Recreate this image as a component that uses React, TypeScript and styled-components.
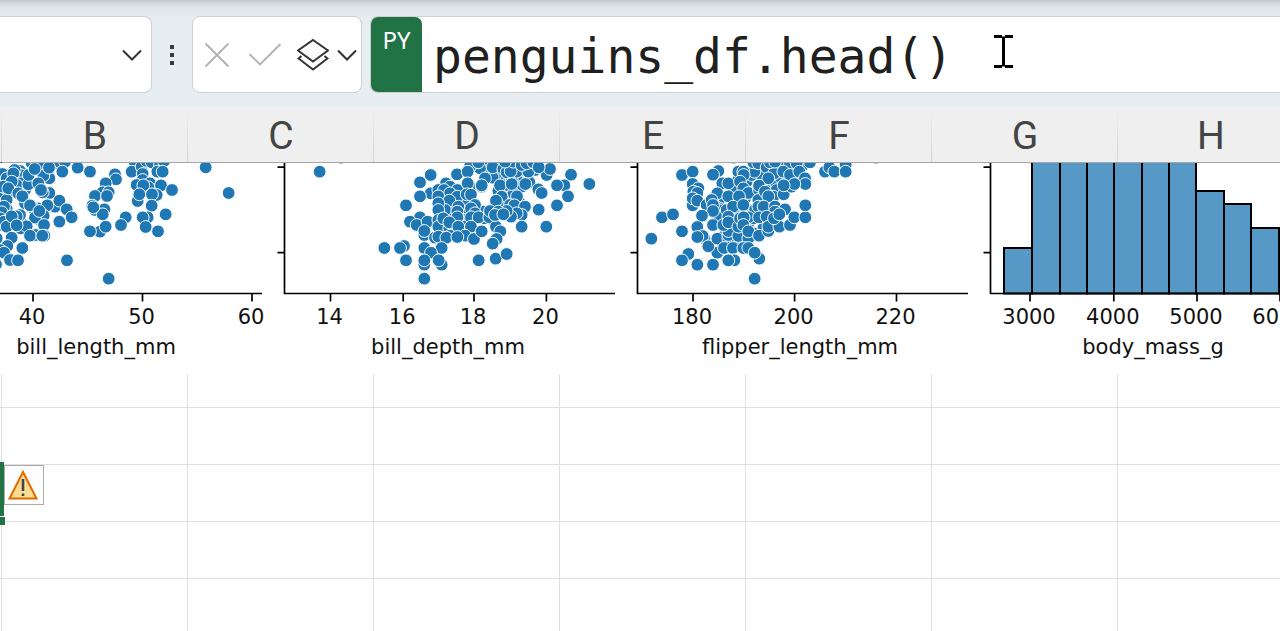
import React, { useEffect, useState } from "react";
import styled, { createGlobalStyle } from "styled-components";

const GlobalStyle = createGlobalStyle`
  *, *::before, *::after { box-sizing: border-box; }
  body {
    margin: 0;
    background: #ffffff;
    color: #444444;
    font-family: "Noto Sans", "Open Sans", sans-serif;
    overflow: hidden;
  }
  button { padding: 0; border: 0; background: none; font: inherit; color: inherit; }
`;

const Page = styled.div`
  display: flex;
  flex-direction: column;
  height: 100vh;
  overflow: hidden;
`;

const FormulaBar = styled.header`
  display: flex;
  flex: none;
  height: 107px;
  padding: 16px 0 14px;
  background: linear-gradient(#c3c8cb 0, #d3d8db 3px, #dfe5e9 8px, #e6eef1 18px);
`;

const Box = styled.div`
  display: flex;
  align-items: center;
  background: #ffffff;
  border: 1px solid #cfcfcf;
  border-radius: 8px;
`;

const NameBox = styled(Box)`
  flex: none;
  width: 152px;
  padding-right: 9px;
  border-left: 0;
  border-top-left-radius: 0;
  border-bottom-left-radius: 0;
`;

const NameInput = styled.input`
  flex: 1;
  min-width: 0;
  height: 60px;
  border: 0;
  outline: 0;
  background: none;
  font: 32px "Noto Sans", sans-serif;
`;

const IconButton = styled.button`
  display: flex;
  flex: none;
  svg { display: block; }
`;

const Grip = styled.div`
  display: flex;
  flex: none;
  flex-direction: column;
  align-items: center;
  justify-content: center;
  gap: 4px;
  width: 40px;
`;

const GripDot = styled.span`
  width: 4px;
  height: 4px;
  background: #3b3b3b;
`;

const ActionBox = styled(Box)`
  flex: none;
  width: 170px;
  margin-right: 8px;
  padding: 0 4px 0 11px;
  justify-content: space-between;
`;

const SplitButton = styled.div`
  display: flex;
  align-items: center;
  gap: 8px;
`;

const FormulaBox = styled(Box)`
  position: relative;
  flex: 1;
  min-width: 0;
  align-items: stretch;
  border-right: 0;
  border-top-right-radius: 0;
  border-bottom-right-radius: 0;
`;

const Language = styled.span`
  flex: none;
  width: 51px;
  padding-top: 7px;
  border-radius: 7px 7px 0 7px;
  background: #217346;
  color: #ffffff;
  font-size: 24px;
  line-height: 32px;
  text-align: center;
`;

const FormulaInput = styled.input`
  flex: 1;
  min-width: 0;
  padding: 2px 0 0 11px;
  border: 0;
  outline: 0;
  background: none;
  color: #202020;
  font: 48px "DejaVu Sans Mono", monospace;
`;

const TextCursor = styled.svg`
  position: absolute;
  left: 623px;
  top: 17px;
`;

const Sheet = styled.main`
  position: relative;
  flex: 1;
  min-height: 0;
  overflow: hidden;
`;

const Grid = styled.table`
  border-collapse: separate;
  border-spacing: 0;
`;

const ColumnHead = styled.th<{ $narrow?: boolean }>`
  min-width: ${(p) => (p.$narrow ? 2 : 186)}px;
  height: 56px;
  padding: 3px 0 0;
  border-bottom: 1px solid ${(p) => (p.$narrow ? "#217346" : "#a6a6a6")};
  background:
    linear-gradient(#efefef, #d3d3d3) right / 1px 100% no-repeat,
    #efefef;
  font-family: Roboto, sans-serif;
  font-size: 39px;
  font-weight: 400;
  line-height: 52px;
`;

const Cell = styled.td<{ $tall?: boolean }>`
  position: relative;
  height: ${(p) => (p.$tall ? 245 : 57)}px;
  padding: 0;
  border-right: 1px solid #e0e0e0;
  border-bottom: 1px solid #e0e0e0;
`;

const Selection = styled.span`
  position: absolute;
  z-index: 1;
  left: 0;
  top: -3px;
  width: 4px;
  height: 54px;
  background: #217346;
  &::after {
    content: "";
    position: absolute;
    left: 0;
    top: 54px;
    width: 5px;
    height: 9px;
    border-top: 1px solid #ffffff;
    background: #217346;
  }
`;

const WarningButton = styled.button`
  position: absolute;
  z-index: 1;
  left: 4px;
  top: 0;
  width: 40px;
  height: 40px;
  border: 1px solid #ababab;
  background: #fdfdfd;
  svg { display: block; }
`;

const Figure = styled.figure`
  position: absolute;
  left: 0;
  top: 56px;
  display: flex;
  width: 100%;
  height: 211px;
  margin: 0;
  overflow: hidden;
  background: #ffffff;
`;

const Panel = styled.svg`
  display: block;
  flex: none;
  font: 21px "DejaVu Sans", sans-serif;
  fill: #111111;
  text-anchor: middle;
`;

type Point = [number, number];
type Tick = [number, string];

/* Marker positions are kept in thirds of a pixel, listed back to front. */
const billLength: Point[] = [
  [30,60],[15,85],[42,70],[70,75],[28,115],[10,120],[75,105],[115,160],[100,160],[75,145],[25,195],[65,205],[120,195],[-4,130],[-4,210],[135,20],[95,24],[150,20],[165,25],
  [7,57],[20,70],[60,48],[62,60],[44,45],[40,55],[62,85],[50,90],[35,80],[85,88],[86,60],[110,25],[125,30],[148,70],[130,62],[104,42],[180,22],[195,20],[147,38],[187,50],[233,38],[270,50],
  [115,85],[10,95],[20,135],[25,100],[55,115],[67,124],[148,114],[128,112],[123,105],[165,155],[178,137],[142,151],[90,151],[131,182],[105,188],[118,168],[200,163],[215,187],[178,200],[132,210],
  [20,162],[12,155],[5,172],[0,190],[12,200],[20,215],[60,180],[50,184],[35,184],[62,220],[80,214],[50,211],[107,240],[133,242],[90,242],[127,242],[35,248],[67,279],[22,273],[-10,250],[0,285],[12,293],[30,315],[54,316],[-12,328],[201,316],[326,371],
  [300,230],[270,229],[317,215],[377,187],[363,210],[345,58],[348,73],[317,85],[308,112],[326,112],[285,123],[321,123],[277,152],[285,165],[313,163],[308,178],[280,157],[405,24],[395,50],[425,35],[440,18],[455,22],[480,30],[492,18],
  [428,57],[472,50],[488,50],[428,75],[410,90],[450,85],[445,97],[430,91],[483,91],[516,105],[413,138],[418,118],[470,120],[456,118],[455,152],[497,178],[443,187],[428,187],[437,216],[474,229],[617,37],[686,114],
];

const billDepth: Point[] = [
  [-151,50],[-87,8],
  [210,115],[230,125],[245,150],[265,135],[285,130],[215,145],[240,165],[290,150],[275,105],[305,100],[320,160],[250,180],[285,175],[300,200],[325,170],[230,205],[285,195],[250,210],[270,230],[300,225],[230,230],[285,215],
  [345,50],[385,45],[355,35],[390,70],[440,70],[450,45],[410,75],[495,45],[455,95],[405,120],[415,105],[430,115],[395,145],[405,150],[370,160],[340,170],[450,145],[370,195],
  [182,60],[150,82],[182,115],[150,124],[108,151],[261,58],[330,40],[300,35],[325,22],[293,50],[228,85],[240,95],[262,105],[293,85],[375,22],[368,68],[368,37],[345,70],[335,95],[335,91],
  [205,105],[222,105],[240,115],[262,125],[205,124],[238,137],[290,118],[303,119],[225,165],[205,145],[205,165],[265,155],[315,150],[303,160],[150,187],[120,200],[140,210],[173,200],[163,240],[163,228],
  [205,195],[205,215],[220,190],[262,170],[262,187],[238,220],[238,202],[315,175],[303,187],[345,190],[326,187],[358,187],[265,215],[303,215],[195,248],[205,245],[240,242],[229,248],[285,242],[262,246],[312,252],[335,229],[378,215],[391,229],[380,252],[368,266],
  [43,279],[102,273],[90,279],[163,279],[215,279],[183,293],[108,316],[163,329],[163,316],[215,329],[206,316],[163,371],[326,316],[377,311],[410,297],
  [408,90],[385,108],[390,91],[425,75],[425,87],[478,82],[466,87],[400,42],[410,52],[440,50],[422,49],[475,50],[430,20],[405,20],[455,30],[470,25],[490,22],[530,60],[540,42],[506,37],[603,59],[658,87],[583,91],[561,91],
  [505,103],[515,114],[594,124],[561,151],[506,164],[441,124],[395,125],[385,150],[378,137],[445,165],[420,150],[433,151],[465,155],[455,180],[440,175],[423,185],[410,168],[360,168],[385,170],[375,180],[400,178],[455,215],[529,215],
];

const flipperLength: Point[] = [
  [325,75],[350,80],[365,60],[325,105],[310,110],[345,130],[385,110],[395,60],[425,50],[445,40],[455,25],[480,25],[405,90],[435,80],[450,65],[475,75],[495,65],[510,70],[515,35],[440,105],
  [235,165],[265,150],[280,125],[265,165],[325,160],[310,175],[355,165],[280,190],[310,195],[325,200],[355,205],[370,190],[395,140],[410,170],[420,195],[430,210],[400,220],[310,225],[340,230],[280,245],[310,250],[370,235],[325,262],
  [156,60],[188,50],[188,87],[205,100],[190,110],[202,114],[188,151],[188,130],[202,137],[265,48],[249,59],[325,50],[373,50],[340,50],[341,60],[370,22],[385,25],[310,8],[410,37],[433,55],[415,70],[420,22],[435,20],
  [460,50],[500,25],[480,60],[508,50],[540,22],[525,70],[526,87],[585,50],[598,37],[647,28],[613,50],[647,50],[738,8],[277,85],[310,95],[295,85],[330,80],[340,100],[262,115],[295,124],[355,114],[327,124],[387,105],[387,92],
  [385,135],[405,110],[430,125],[415,124],[461,118],[485,95],[493,87],[461,91],[230,150],[245,135],[249,150],[262,185],[249,168],[290,165],[309,155],[340,150],[375,165],[385,155],[401,155],[435,155],[465,163],[435,170],[216,182],
  [249,210],[202,216],[223,250],[218,243],[202,246],[96,187],[129,178],[64,251],[156,229],[175,297],[156,316],[202,329],[249,329],[262,293],[235,274],[262,251],[295,250],[295,240],[295,228],[280,210],[295,185],[295,202],
  [325,243],[325,215],[330,190],[355,187],[341,187],[340,210],[355,250],[355,229],[282,279],[309,279],[387,242],[387,187],[410,185],[415,228],[415,215],[448,215],[432,190],[448,178],[480,210],[493,187],[526,187],[526,151],
  [340,279],[355,279],[388,311],[374,293],[313,316],[295,316],[374,371],
];

const edges = [22, 50, 78, 105, 132, 160, 187, 214, 242, 269, 297, 325];
const tops = [85, -20, -20, -20, -20, -20, -20, 28, 41, 65, 114];

function Axis({ left, right, ticks, label, center }: {
  left: number; right: number; ticks: Tick[]; label: string; center: number;
}) {
  return (
    <>
      <g stroke="#000000" strokeWidth="1.7" fill="none">
        <path d={`M${left} -5V130.5H${right}`} />
        <path d={`M${left - 7} 4.2h7M${left - 7} 89.7h7`} />
        {ticks.map(([x]) => <path key={x} d={`M${x} 130.5v8`} />)}
      </g>
      {ticks.map(([x, name]) => <text key={name} x={x - 1} y="161">{name}</text>)}
      <text x={center} y="191">{label}</text>
    </>
  );
}

function Scatter({ points, shift }: { points: Point[]; shift: number }) {
  return (
    <g fill="#1f77b4" stroke="#ffffff" strokeWidth="1">
      {points.map(([x, y], i) => (
        <circle key={i} cx={(x + shift) / 3} cy={(y - 24) / 3} r="6.4" />
      ))}
    </g>
  );
}

function PairPlot() {
  return (
    <Figure aria-label="Pair plot of penguin measurements">
      <Panel width="276" height="211">
        <Scatter points={billLength} shift={0} />
        <Axis left={-69} right={262} center={96} label="bill_length_mm"
          ticks={[[33, "40"], [142.5, "50"], [252, "60"]]} />
      </Panel>
      <Panel width="353" height="211">
        <Scatter points={billDepth} shift={282} />
        <Axis left={8.5} right={339} center={172} label="bill_depth_mm"
          ticks={[[54.5, "14"], [127.2, "16"], [198, "18"], [270.4, "20"]]} />
      </Panel>
      <Panel width="353" height="211">
        <Scatter points={flipperLength} shift={3} />
        <Axis left={8.5} right={339} center={171} label="flipper_length_mm"
          ticks={[[64, "180"], [165.6, "200"], [267.5, "220"]]} />
      </Panel>
      <Panel width="353" height="211">
        <g fill="#5799c6" stroke="#000000" strokeWidth="2">
          {tops.map((top, i) => (
            <rect key={i} x={edges[i]} y={top} width={edges[i + 1] - edges[i]} height={130.5 - top} />
          ))}
        </g>
        <Axis left={8.5} right={339} center={171} label="body_mass_g"
          ticks={[[48, "3000"], [131.8, "4000"], [215, "5000"], [298, "6000"]]} />
      </Panel>
    </Figure>
  );
}

function Chevron() {
  return (
    <svg width="20" height="12" viewBox="0 0 20 12" fill="none" stroke="#333333" strokeWidth="2">
      <path d="M1 1.5 10 10.5 19 1.5" />
    </svg>
  );
}

/* Names of the columns, from B on, that the window has room for. */
function useColumns() {
  const [width, setWidth] = useState(window.innerWidth);
  useEffect(() => {
    const update = () => setWidth(window.innerWidth);
    window.addEventListener("resize", update);
    return () => window.removeEventListener("resize", update);
  }, []);
  const count = Math.min(25, Math.ceil(width / 186));
  return Array.from({ length: count }, (_, i) => String.fromCharCode(66 + i));
}

const rows = [0, 1, 2, 3, 4];

export default function App() {
  const [formula, setFormula] = useState("penguins_df.head()");
  const columns = useColumns();
  return (
    <Page>
      <GlobalStyle />
      <FormulaBar>
        <NameBox>
          <NameInput aria-label="Name box" />
          <IconButton aria-label="Open name list"><Chevron /></IconButton>
        </NameBox>
        <Grip>
          <GripDot /><GripDot /><GripDot />
        </Grip>
        <ActionBox>
          <IconButton aria-label="Cancel">
            <svg width="26" height="26" viewBox="0 0 26 26" fill="none" stroke="#b1b1b1" strokeWidth="1.8">
              <path d="M1.5 1.5 24.5 24.5M24.5 1.5 1.5 24.5" />
            </svg>
          </IconButton>
          <IconButton aria-label="Enter">
            <svg width="34" height="26" viewBox="-1 0 34 26" fill="none" stroke="#b1b1b1" strokeWidth="1.9">
              <path d="M1.5 12 12 22.5 32.5 2" />
            </svg>
          </IconButton>
          <SplitButton>
            <IconButton aria-label="Python output">
              <svg width="32" height="34" viewBox="0 0 32 34" fill="none" stroke="#333333" strokeWidth="2">
                <path d="M16 2 31 12.500 16 23.500 1 12.500Z" fill="#fafafa" />
                <path d="M4.500 18 1.500 20.500 16 31.500 30.500 20.500 27.500 18" />
              </svg>
            </IconButton>
            <IconButton aria-label="Output options"><Chevron /></IconButton>
          </SplitButton>
        </ActionBox>
        <FormulaBox>
          <Language>PY</Language>
          <FormulaInput aria-label="Formula" spellCheck={false} value={formula}
            onChange={(e) => setFormula(e.target.value)} />
          <TextCursor width="20" height="35" viewBox="0 0 20 35" stroke="#000000" strokeWidth="3" fill="none">
            <path d="M0 2.5H8M11 2.5H19M0 32.5H8M11 32.5H19M9.5 2.5V32.5" />
          </TextCursor>
        </FormulaBox>
      </FormulaBar>
      <Sheet>
        <Grid>
          <thead>
            <tr>
              <ColumnHead $narrow aria-label="A" />
              {columns.map((name) => <ColumnHead key={name} scope="col">{name}</ColumnHead>)}
            </tr>
          </thead>
          <tbody>
            {rows.map((row) => (
              <tr key={row}>
                <Cell $tall={row === 0}>
                  {row === 2 && (
                    <>
                      <Selection />
                      <WarningButton aria-label="Error options">
                        <svg width="38" height="38" viewBox="0 0 38 38">
                          <path d="M18 6 31.5 32.5H4.5Z" fill="#f9dc92" stroke="#e06c00" strokeWidth="2" />
                          <path d="M18 13V25M18 27.5V30" stroke="#444444" strokeWidth="2.6" />
                        </svg>
                      </WarningButton>
                    </>
                  )}
                </Cell>
                {columns.map((name) => <Cell key={name} $tall={row === 0} />)}
              </tr>
            ))}
          </tbody>
        </Grid>
        <PairPlot />
      </Sheet>
    </Page>
  );
}
